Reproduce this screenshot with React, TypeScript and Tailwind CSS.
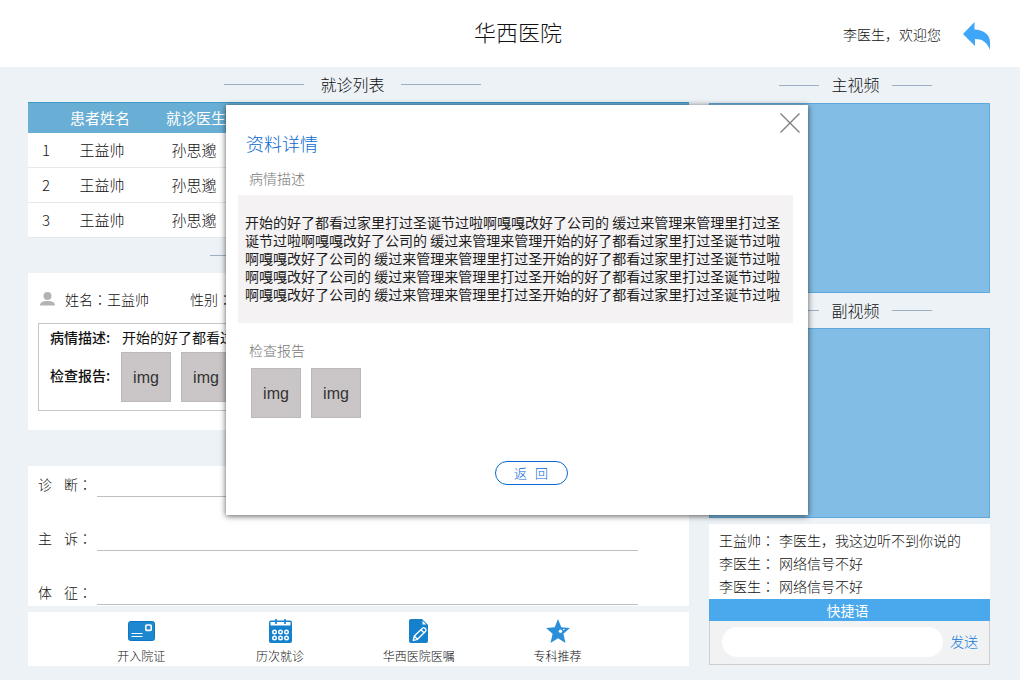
import type { ReactNode } from 'react'
import clsx from 'clsx'

const patients = [
  { id: 1, name: '王益帅', doctor: '孙思邈' },
  { id: 2, name: '王益帅', doctor: '孙思邈' },
  { id: 3, name: '王益帅', doctor: '孙思邈' },
]

const messages = [
  { id: 1, from: '王益帅', text: '李医生，我这边听不到你说的' },
  { id: 2, from: '李医生', text: '网络信号不好' },
  { id: 3, from: '李医生', text: '网络信号不好' },
]

const fields = [
  { id: 'diagnosis', first: '诊', last: '断' },
  { id: 'complaint', first: '主', last: '诉' },
  { id: 'signs', first: '体', last: '征' },
]

const description =
  '开始的好了都看过家里打过圣诞节过啦啊嘎嘎改好了公司的 缓过来管理来管理里打过圣' +
  '诞节过啦啊嘎嘎改好了公司的 缓过来管理来管理开始的好了都看过家里打过圣诞节过啦' +
  '啊嘎嘎改好了公司的 缓过来管理来管理里打过圣开始的好了都看过家里打过圣诞节过啦' +
  '啊嘎嘎改好了公司的 缓过来管理来管理里打过圣开始的好了都看过家里打过圣诞节过啦' +
  '啊嘎嘎改好了公司的 缓过来管理来管理里打过圣开始的好了都看过家里打过圣诞节过啦'

function BackIcon() {
  return (
    <svg width="27" height="28" viewBox="0 0 27 28" fill="#3fa6f8" aria-hidden="true">
      <path d="M0 12 11.5 0V7.5C20 8 27 12 27 20V28C24 20 19 17 12 17V24Z" />
    </svg>
  )
}

function UserIcon() {
  return (
    <svg width="15" height="14" viewBox="0 0 15 14" fill="#b3b3b3" aria-hidden="true">
      <circle cx="7.5" cy="4" r="4" />
      <path d="M0 13.5C.3 10 3 9 7.5 9s7.2 1 7.5 4.5Z" />
    </svg>
  )
}

function CardIcon() {
  return (
    <svg width="27" height="20" viewBox="0 0 27 20" aria-hidden="true">
      <rect x=".5" y=".5" width="26" height="19" rx="2" fill="#1d87d0" stroke="#0f76c4" />
      <rect x="17.8" y="4" width="5.4" height="5.4" rx="1" fill="none" stroke="#fff" strokeWidth="1.6" />
      <path d="M3.5 12.5h11M3.5 15.5h11" stroke="#fff" strokeWidth="1.2" />
    </svg>
  )
}

function CalendarIcon() {
  return (
    <svg width="23" height="24" viewBox="0 0 23 24" aria-hidden="true">
      <rect y="1.5" width="23" height="22.5" rx="2" fill="#1580cc" />
      <path d="M1.5 3h20v3.5h-20z" fill="#fff" />
      <path d="M7 0v5M16 0v5" stroke="#1580cc" strokeWidth="1.6" />
      <g fill="none" stroke="#fff" strokeWidth="1.4">
        <circle cx="5.5" cy="13" r="1.8" />
        <circle cx="11.5" cy="13" r="1.8" />
        <circle cx="17.5" cy="13" r="1.8" />
        <circle cx="5.5" cy="19" r="1.8" />
        <circle cx="11.5" cy="19" r="1.8" />
        <circle cx="17.5" cy="19" r="1.8" />
      </g>
    </svg>
  )
}

function NoteIcon() {
  return (
    <svg width="19" height="24" viewBox="0 0 19 24" aria-hidden="true">
      <path d="M2 0h11l6 6v16a2 2 0 0 1-2 2H2a2 2 0 0 1-2-2V2a2 2 0 0 1 2-2Z" fill="#1580cc" />
      <path d="M13.5 1.8V5.5h3.7Z" fill="#fff" />
      <path
        d="M4.3 21.5 5.3 17 13.5 9.2a1.7 1.7 0 0 1 2.4 0l.7.8a1.7 1.7 0 0 1 0 2.3L8.5 20.3ZM12 10.7l3 3M5.3 17l3.2 3.3"
        fill="none"
        stroke="#fff"
        strokeWidth="1.3"
        strokeLinejoin="round"
      />
    </svg>
  )
}

function StarIcon() {
  return (
    <svg width="24" height="24" viewBox="0 0 24 24" aria-hidden="true">
      <path d="m12 0 3.3 8.3L24 9l-6.6 5.8L19.5 24 12 19.2 4.5 24l2.1-9.2L0 9l8.7-.7Z" fill="#2a8fd8" />
      <circle cx="14.5" cy="12.3" r="1.7" fill="#fff" />
      <circle cx="17.8" cy="10.5" r=".8" fill="#fff" />
    </svg>
  )
}

const tools = [
  { label: '开入院证', icon: <CardIcon /> },
  { label: '历次就诊', icon: <CalendarIcon /> },
  { label: '华西医院医嘱', icon: <NoteIcon /> },
  { label: '专科推荐', icon: <StarIcon /> },
]

// The TC face centres the full-width colon in its cell
function Colon() {
  return <span className="font-['Noto_Sans_CJK_TC',sans-serif]">：</span>
}

function SectionTitle({ children, wide, className }: { children?: ReactNode; wide?: boolean; className?: string }) {
  const line = clsx('h-px bg-[#9db0c2]', wide ? 'w-20' : 'w-10')
  return (
    <div className={clsx('flex items-center justify-center', className)}>
      <span className={line} />
      {children && <h2 className="pb-0.5 text-base">{children}</h2>}
      <span className={line} />
    </div>
  )
}

function Thumb() {
  return (
    <button
      type="button"
      className="size-[50px] border border-[#bdb9b9] bg-[#cac6c7] pt-0.5 font-['Liberation_Sans',sans-serif] text-base font-normal text-[#333]"
    >
      img
    </button>
  )
}

function DetailDialog() {
  return (
    <div className="absolute inset-x-0 top-[105px] flex justify-center pl-3.5">
      <section
        role="dialog"
        aria-labelledby="dialog-title"
        className="relative w-[582px] bg-white px-3 pt-[26px] pb-[30px] shadow-[0_1px_6px_rgba(0,0,0,0.65)]"
      >
        <button type="button" aria-label="关闭" className="absolute top-2 right-2">
          <svg width="20" height="20" viewBox="0 0 20 20" stroke="#7d7d7d" strokeWidth="1.3" aria-hidden="true">
            <path d="M.5.5 19.5 19.5M19.5.5.5 19.5" />
          </svg>
        </button>

        <h2 id="dialog-title" className="pl-2 text-lg leading-6 text-[#0869d2]">资料详情</h2>

        <h3 className="mt-[13px] pl-[11px] text-sm text-[#777]">病情描述</h3>
        <p className="mt-[7px] mr-[3px] bg-[#f4f2f3] px-[7px] pt-[18px] pb-5 text-sm leading-[18px] font-normal text-[#1e1e1e]">
          {description}
        </p>

        <h3 className="mt-[17px] pl-[11px] text-sm text-[#777]">检查报告</h3>
        <div className="mt-2 flex gap-2.5 pl-[13px]">
          <Thumb />
          <Thumb />
        </div>

        <div className="mt-[43px] flex justify-center pl-7">
          <button
            type="button"
            className="flex h-6 w-[73px] items-center justify-center gap-2 rounded-full border border-[#0869d2] text-[13px] text-[#0869d2]"
          >
            <span>返</span>
            <span>回</span>
          </button>
        </div>
      </section>
    </div>
  )
}

export default function App() {
  return (
    <div className="relative min-h-screen bg-[#edf2f6] font-['Noto_Sans_CJK_SC',sans-serif] font-light text-[#111]">
      <header className="grid h-[67px] grid-cols-[1fr_auto_1fr] items-center bg-white pr-[30px] pl-[46px]">
        <h1 className="col-start-2 pb-1 text-[22px]">华西医院</h1>
        <div className="flex items-center justify-end gap-[22px]">
          <span className="text-sm">李医生，欢迎您</span>
          <a href="#back" aria-label="返回" className="pt-1">
            <BackIcon />
          </a>
        </div>
      </header>

      <main className="flex gap-5 pr-[30px] pb-3.5 pl-7">
        <div className="min-w-0 flex-1">
          <SectionTitle wide className="h-[35px] gap-4 pr-3">就诊列表</SectionTitle>

          <table className="w-full table-fixed border-separate border-spacing-0 bg-white text-center text-[15px]">
            <colgroup>
              <col className="w-9" />
              <col className="w-[76px]" />
              <col className="w-28" />
              <col />
            </colgroup>
            <thead>
              <tr className="h-[31px] bg-[#69aed4] text-white *:border-t *:border-[#3f97c6]">
                <td />
                <th scope="col" className="pr-1 font-normal">患者姓名</th>
                <th scope="col" className="font-normal">就诊医生</th>
                <td />
              </tr>
            </thead>
            <tbody>
              {patients.map((p) => (
                <tr key={p.id} className="h-[35px] *:border-b *:border-[#e4e9ee]">
                  <td>{p.id}</td>
                  <td>{p.name}</td>
                  <td className="pr-1">{p.doctor}</td>
                  <td />
                </tr>
              ))}
            </tbody>
          </table>

          <SectionTitle wide className="h-[35px] gap-[126px] pr-3" />

          {/* Patient info */}
          <section className="bg-white px-2.5 pt-[15px] pb-[19px] text-sm">
            <div className="flex items-center pl-0.5 leading-[22px]">
              <UserIcon />
              <span className="ml-2.5 w-[125px]">姓名<Colon />王益帅</span>
              <span>性别<Colon /></span>
            </div>
            <div className="mt-[13px] border border-[#c6c6c6] px-[11px] pt-1 pb-2">
              <div className="flex h-6 gap-2 leading-[18px]">
                <h3 className="w-16 font-medium">病情描述:</h3>
                <p className="w-0 flex-1 truncate font-normal">{description.slice(0, 36)}</p>
              </div>
              <div className="flex items-center">
                <h3 className="w-[71px] pb-1 font-medium">检查报告:</h3>
                <div className="flex gap-2.5">
                  <Thumb />
                  <Thumb />
                </div>
              </div>
            </div>
          </section>

          {/* Record form */}
          <form className="mt-9 flex flex-col gap-6 bg-white py-px pr-[51px] pl-2.5">
            {fields.map((f) => (
              <div key={f.id} className="flex h-[30px] items-end">
                <label htmlFor={f.id} className="flex w-[59px] gap-3 text-sm leading-[26px]">
                  <span>{f.first}</span>
                  <span>{f.last}<Colon /></span>
                </label>
                <input id={f.id} type="text" className="h-6 flex-1 border-b border-[#bfbfbf] text-sm outline-none" />
              </div>
            ))}
          </form>

          <nav className="mt-1.5 grid h-[54px] grid-cols-4 bg-white pr-[62px] pl-11">
            {tools.map((t) => (
              <button key={t.label} type="button" className="flex flex-col items-center pt-1.5 text-xs">
                <span className="flex h-[26px] items-center">{t.icon}</span>
                <span className="mt-1">{t.label}</span>
              </button>
            ))}
          </nav>
        </div>

        <aside className="w-[281px] shrink-0">
          <SectionTitle className="h-9 gap-3 pl-3">主视频</SectionTitle>
          <div className="h-[190px] border border-[#5fa8dc] bg-[#82bde5]" />
          <SectionTitle className="h-[35px] gap-3 pl-3">副视频</SectionTitle>
          <div className="h-[190px] border border-[#5fa8dc] bg-[#82bde5]" />

          <ul className="mt-1.5 bg-white px-2.5 pt-[5px] pb-px text-sm leading-[23px]">
            {messages.map((m) => (
              <li key={m.id} className="flex gap-1">
                <span>{m.from}<Colon /></span>
                <span>{m.text}</span>
              </li>
            ))}
          </ul>
          <button type="button" className="block h-[22px] w-full bg-[#49a9ec] pr-1 text-sm font-normal text-white">
            快捷语
          </button>
          <form className="flex h-11 items-center gap-[7px] border border-t-0 border-[#cfcccc] bg-[#f1f2f4] pr-[11px] pb-0.5 pl-3">
            <input type="text" aria-label="消息" className="h-[30px] w-0 flex-1 rounded-full bg-white px-3 text-sm outline-none" />
            <button type="button" className="pb-0.5 text-sm text-[#0f78d8]">发送</button>
          </form>
        </aside>
      </main>

      <DetailDialog />
    </div>
  )
}
